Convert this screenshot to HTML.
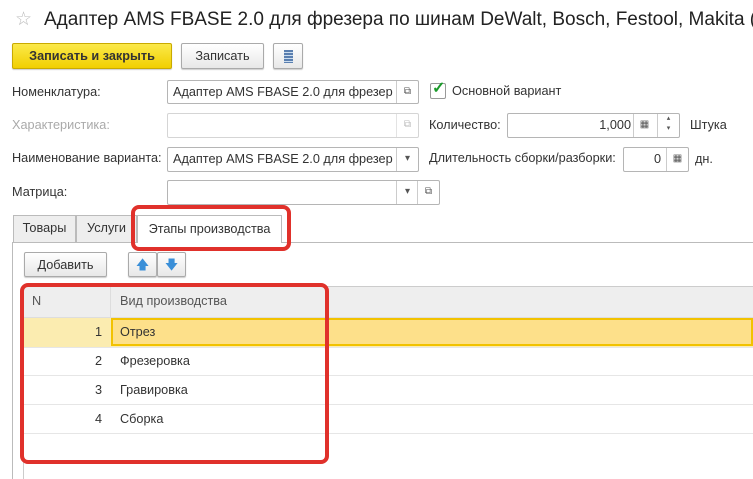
<!DOCTYPE html>
<html><head><meta charset="utf-8"><style>
body{margin:0;width:753px;height:479px;overflow:hidden;background:#fff;font-family:"Liberation Sans",sans-serif;font-size:12.7px;color:#333;position:relative}
.a{position:absolute}
.f{position:absolute;border:1px solid #b5b5b5;border-radius:2px;background:#fff;box-sizing:border-box;white-space:nowrap;overflow:hidden}
.f span{position:absolute;left:5px;top:4px}
.btn{position:absolute;box-sizing:border-box;border:1px solid #aaa;border-radius:2px;background:linear-gradient(#fff,#e8e8e8);text-align:center;line-height:24px;box-shadow:0 1px 1px #ccc}
.ic{position:absolute;top:0;bottom:0;width:21px;border-left:1px solid #ccc;font-size:10px;color:#555;text-align:center;line-height:22px}
.red{position:absolute;border:4px solid #e0312b;border-radius:8px;box-sizing:border-box}
.row{position:absolute;left:23px;right:0;height:29px;border-bottom:1px solid #e6e6e6}
</style></head><body>
<div class="a" style="left:15px;top:8px;font-size:19px;color:#bbb">☆</div>
<div class="a" style="left:44px;top:9px;font-size:19px;color:#222;white-space:nowrap">Адаптер AMS FBASE 2.0 для фрезера по шинам DeWalt, Bosch, Festool, Makita (с</div>
<div class="btn" style="left:12px;top:43px;width:160px;height:26px;background:linear-gradient(#fbe94a,#f1cf00);border-color:#c9aa00;font-weight:bold;color:#333">Записать и закрыть</div>
<div class="btn" style="left:181px;top:43px;width:83px;height:26px">Записать</div>
<div class="btn" style="left:273px;top:43px;width:30px;height:26px"><div style="position:absolute;left:10px;top:6px;width:9px;height:13px;background:repeating-linear-gradient(#5a7fb0 0 2px,#cde 2px 3px)"></div></div>

<div class="a" style="left:12px;top:85px">Номенклатура:</div>
<div class="f" style="left:167px;top:80px;width:252px;height:24px"><span>Адаптер AMS FBASE 2.0 для фрезер</span><div class="ic" style="right:0">⧉</div></div>
<div class="a" style="left:430px;top:83px;width:14px;height:14px;border:1px solid #999;border-radius:2px"></div>
<div class="a" style="left:432px;top:78px;color:#1a9a2a;font-size:16px;font-weight:bold">✓</div>
<div class="a" style="left:452px;top:84px">Основной вариант</div>

<div class="a" style="left:12px;top:118px;color:#aaa">Характеристика:</div>
<div class="f" style="left:167px;top:113px;width:252px;height:25px;border-color:#d5d5d5"><div class="ic" style="right:0;color:#bbb;border-color:#e3e3e3">⧉</div></div>
<div class="a" style="left:429px;top:118px">Количество:</div>
<div class="f" style="left:507px;top:113px;width:173px;height:25px"><span style="left:auto;right:48px">1,000</span><div class="ic" style="right:24px">▦</div><div class="ic" style="right:0;line-height:10px;font-size:7px">▴<br>▾</div></div>
<div class="a" style="left:690px;top:118px">Штука</div>

<div class="a" style="left:12px;top:151px">Наименование варианта:</div>
<div class="f" style="left:167px;top:147px;width:252px;height:25px"><span>Адаптер AMS FBASE 2.0 для фрезер</span><div class="ic" style="right:0">▾</div></div>
<div class="a" style="left:429px;top:151px">Длительность сборки/разборки:</div>
<div class="f" style="left:623px;top:147px;width:66px;height:25px"><span style="left:auto;right:27px">0</span><div class="ic" style="right:0">▦</div></div>
<div class="a" style="left:695px;top:152px">дн.</div>

<div class="a" style="left:12px;top:185px">Матрица:</div>
<div class="f" style="left:167px;top:180px;width:273px;height:25px"><div class="ic" style="right:21px">▾</div><div class="ic" style="right:0">⧉</div></div>

<div class="a" style="left:12px;top:242px;right:0;border-top:1px solid #bbb"></div>
<div class="a" style="left:12px;top:242px;bottom:0;border-left:1px solid #bbb"></div>
<div class="a" style="left:13px;top:215px;width:63px;height:27px;background:#eee;border:1px solid #bbb;border-bottom:none;box-sizing:border-box;line-height:25px;text-align:center">Товары</div>
<div class="a" style="left:76px;top:215px;width:61px;height:27px;background:#eee;border:1px solid #bbb;border-bottom:none;box-sizing:border-box;line-height:25px;text-align:center">Услуги</div>
<div class="a" style="left:137px;top:215px;width:145px;height:28px;background:#fff;border:1px solid #bbb;border-bottom:none;box-sizing:border-box;line-height:26px;text-align:center">Этапы производства</div>
<div class="red" style="left:131px;top:205px;width:160px;height:46px"></div>

<div class="btn" style="left:24px;top:252px;width:83px;height:25px">Добавить</div>
<div class="btn" style="left:128px;top:252px;width:29px;height:25px;color:#3a8fd8;font-size:13px">🡅</div>
<div class="btn" style="left:157px;top:252px;width:29px;height:25px;color:#3a8fd8;font-size:13px">🡇</div>

<div class="a" style="left:23px;top:286px;right:0;bottom:0;border-left:1px solid #ccc;border-top:1px solid #ccc"></div>
<div class="a" style="left:24px;top:287px;right:0;height:30px;background:#eee;border-bottom:1px solid #ddd"></div>
<div class="a" style="left:110px;top:287px;height:30px;border-left:1px solid #ddd"></div>
<div class="a" style="left:32px;top:294px;color:#555">N</div>
<div class="a" style="left:120px;top:294px;color:#555">Вид производства</div>
<div class="row" style="top:318px;left:24px;background:#fbecb0"></div>
<div class="a" style="left:111px;top:318px;right:0;height:28px;box-sizing:border-box;border:2px solid #f2c200;background:#fde08a"></div>
<div class="a" style="left:60px;top:325px;width:42px;text-align:right">1</div><div class="a" style="left:120px;top:325px">Отрез</div>
<div class="row" style="top:346px;left:24px"></div>
<div class="a" style="left:60px;top:354px;width:42px;text-align:right">2</div><div class="a" style="left:120px;top:354px">Фрезеровка</div>
<div class="row" style="top:375px;left:24px"></div>
<div class="a" style="left:60px;top:383px;width:42px;text-align:right">3</div><div class="a" style="left:120px;top:383px">Гравировка</div>
<div class="row" style="top:404px;left:24px"></div>
<div class="a" style="left:60px;top:412px;width:42px;text-align:right">4</div><div class="a" style="left:120px;top:412px">Сборка</div>
<div class="red" style="left:20px;top:283px;width:309px;height:181px"></div>
</body></html>
